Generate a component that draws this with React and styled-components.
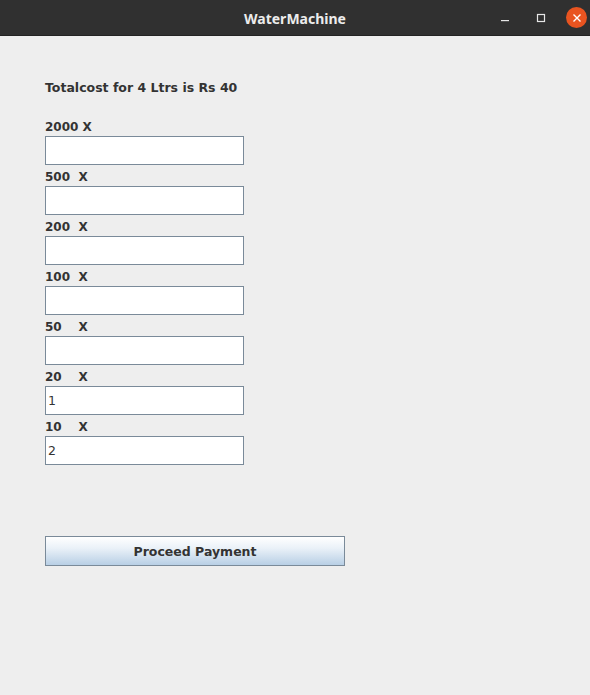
import styled, { createGlobalStyle } from "styled-components";

const GlobalStyle = createGlobalStyle`
  html, body {
    margin: 0;
    padding: 0;
    background: #eeeeee;
  }
  * { box-sizing: border-box; }
`;

const Window = styled.div`
  width: 590px;
  height: 695px;
  display: flex;
  flex-direction: column;
  background: #eeeeee;
  font-family: "DejaVu Sans", "Liberation Sans", sans-serif;
  overflow: hidden;
`;

const TitleBar = styled.div`
  height: 36px;
  flex-shrink: 0;
  background: #303030;
  border-bottom: 1px solid #232323;
  display: grid;
  grid-template-columns: 1fr auto 1fr;
  align-items: center;
  padding: 0 3px;
`;

const Title = styled.div`
  grid-column: 2;
  color: #ececec;
  font-family: "Noto Sans", "DejaVu Sans", sans-serif;
  font-weight: bold;
  font-size: 14px;
  padding-top: 1px;
`;

const Controls = styled.div`
  grid-column: 3;
  justify-self: end;
  display: flex;
  align-items: center;
  gap: 15px;
`;

const Ctl = styled.div`
  width: 21px;
  height: 21px;
  display: flex;
  align-items: center;
  justify-content: center;
  border-radius: 50%;
  background: ${({ $close }) => ($close ? "#e95420" : "transparent")};
`;

const Content = styled.div`
  display: flex;
  flex-direction: column;
  align-items: flex-start;
  padding: 41px 0 0 45px;
  color: #333333;
  font-size: 12.5px;
  font-weight: bold;
`;

const Heading = styled.div`
  height: 21px;
  line-height: 21px;
  margin-bottom: 17px;
`;

const Row = styled.div`
  display: flex;
  flex-direction: column;
`;

const Label = styled.div`
  height: 21px;
  line-height: 21px;
  padding-top: 2px;
  font-size: 12px;
  white-space: pre;
`;

const Field = styled.input`
  width: 199px;
  height: 29px;
  margin: 0;
  border: 1px solid #7a8a99;
  background: #ffffff;
  padding: 0 2px 0 2px;
  font-family: "DejaVu Sans", sans-serif;
  font-size: 12.5px;
  font-weight: normal;
  color: #333333;
  outline: none;
`;

const Button = styled.button`
  margin-top: 71px;
  width: 300px;
  height: 30px;
  border: 1px solid #7a8a99;
  background: linear-gradient(to bottom, #ffffff 0%, #eaf1f8 40%, #b8cfe5 100%);
  font-family: "DejaVu Sans", sans-serif;
  font-size: 12.5px;
  font-weight: bold;
  color: #333333;
  padding: 0;
`;

const rows = [
  { label: "2000 X", value: "" },
  { label: "500  X", value: "" },
  { label: "200  X", value: "" },
  { label: "100  X", value: "" },
  { label: "50    X", value: "" },
  { label: "20    X", value: "1" },
  { label: "10    X", value: "2" },
];

const App = () => {
  return (
    <Window>
      <GlobalStyle />
      <TitleBar>
        <Title>WaterMachine</Title>
        <Controls>
          <Ctl>
            <svg width="10" height="10" viewBox="0 0 10 10">
              <rect x="1" y="7" width="8" height="1.2" fill="#e6e6e6" />
            </svg>
          </Ctl>
          <Ctl>
            <svg width="10" height="10" viewBox="0 0 10 10">
              <rect x="1.5" y="1.5" width="7" height="7" fill="none" stroke="#e6e6e6" strokeWidth="1.2" />
            </svg>
          </Ctl>
          <Ctl $close>
            <svg width="10" height="10" viewBox="0 0 10 10">
              <path d="M1.5 1.5 L8.5 8.5 M8.5 1.5 L1.5 8.5" stroke="#ffffff" strokeWidth="1.4" />
            </svg>
          </Ctl>
        </Controls>
      </TitleBar>
      <Content>
        <Heading>Totalcost for 4 Ltrs is Rs 40</Heading>
        {rows.map((r) => (
          <Row key={r.label}>
            <Label>{r.label}</Label>
            <Field defaultValue={r.value} />
          </Row>
        ))}
        <Button>Proceed Payment</Button>
      </Content>
    </Window>
  );
};

export default App;
